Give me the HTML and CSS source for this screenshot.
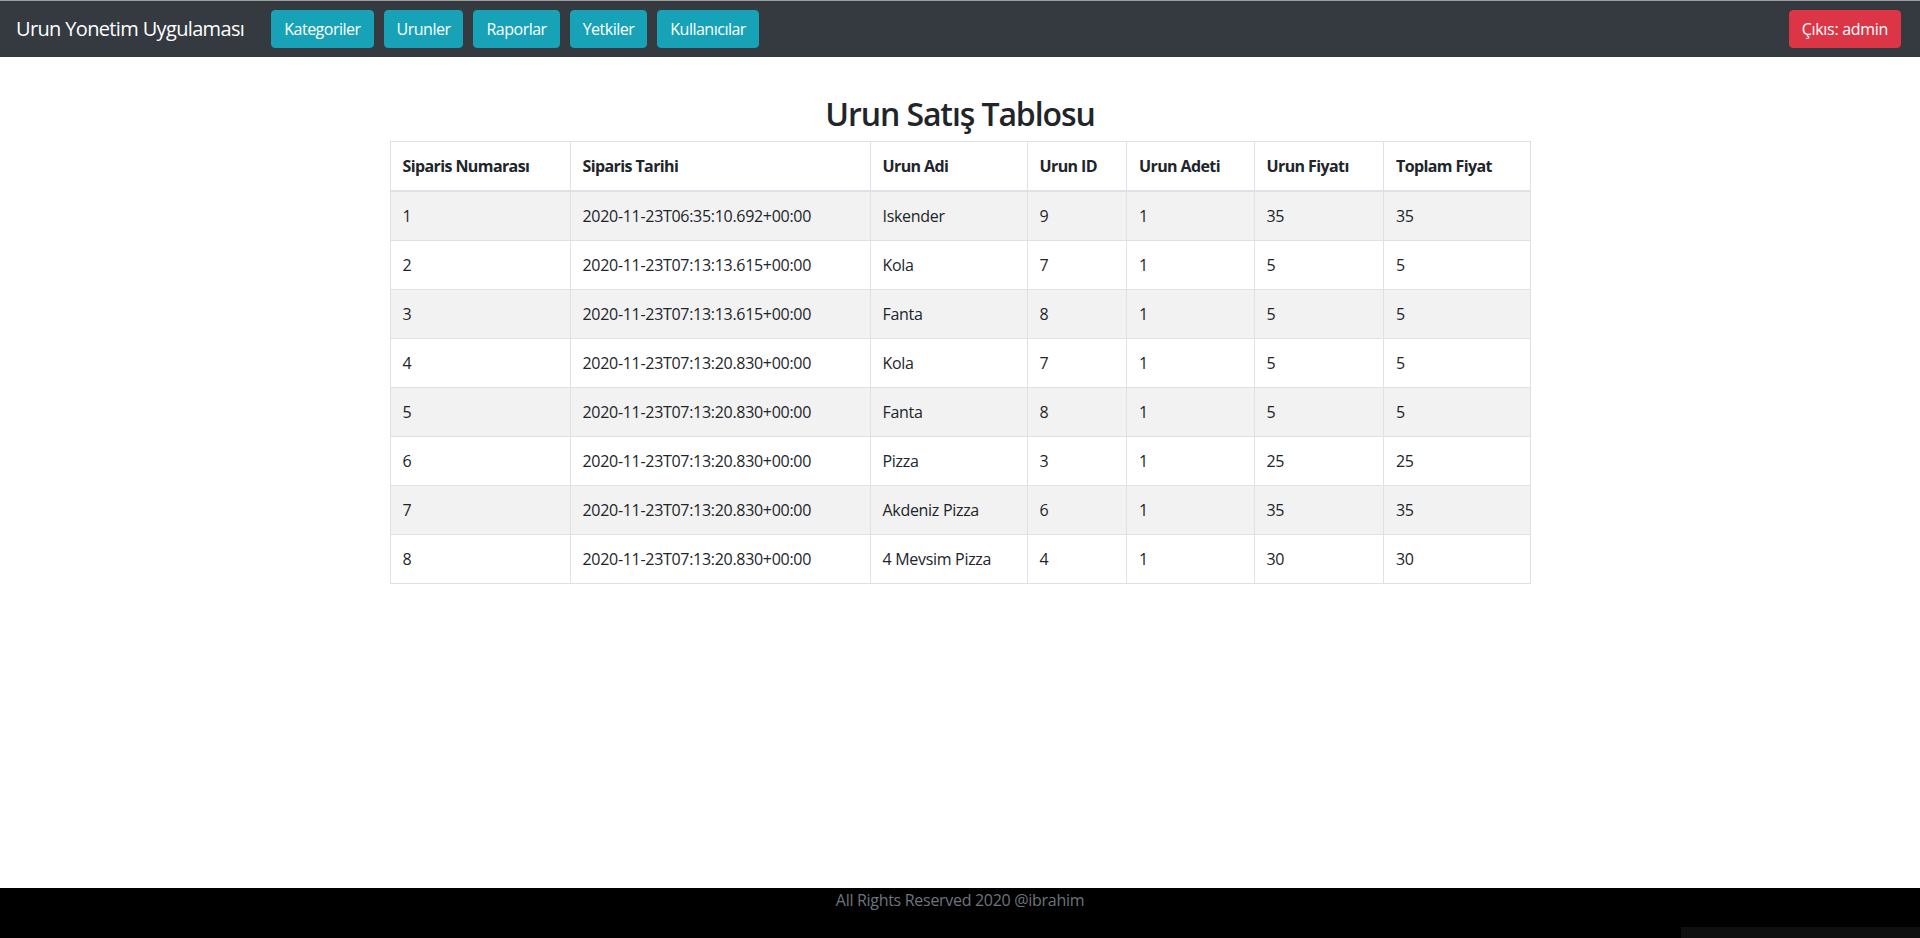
FILE: index.html
```html
<!DOCTYPE html>
<html lang="tr">
<head>
<meta charset="utf-8">
<title>Urun Satış Tablosu</title>
<link rel="stylesheet" href="styles.css">
</head>
<body>
<nav class="navbar">
  <a class="brand" href="#">Urun Yonetim Uygulaması</a>
  <div class="nav-buttons">
    <a class="btn btn-info" href="#">Kategoriler</a>
    <a class="btn btn-info" href="#">Urunler</a>
    <a class="btn btn-info" href="#">Raporlar</a>
    <a class="btn btn-info" href="#">Yetkiler</a>
    <a class="btn btn-info" href="#">Kullanıcılar</a>
  </div>
  <a class="btn btn-danger logout" href="#">Çıkıs: admin</a>
</nav>

<main class="content">
  <h2 class="title">Urun Satış Tablosu</h2>
  <table class="sales-table">
    <colgroup>
      <col class="c1"><col class="c2"><col class="c3"><col class="c4"><col class="c5"><col class="c6"><col class="c7">
    </colgroup>
    <thead>
      <tr>
        <th>Siparis Numarası</th>
        <th>Siparis Tarihi</th>
        <th>Urun Adi</th>
        <th>Urun ID</th>
        <th>Urun Adeti</th>
        <th>Urun Fiyatı</th>
        <th>Toplam Fiyat</th>
      </tr>
    </thead>
    <tbody>
      <tr><td>1</td><td>2020-11-23T06:35:10.692+00:00</td><td>Iskender</td><td>9</td><td>1</td><td>35</td><td>35</td></tr>
      <tr><td>2</td><td>2020-11-23T07:13:13.615+00:00</td><td>Kola</td><td>7</td><td>1</td><td>5</td><td>5</td></tr>
      <tr><td>3</td><td>2020-11-23T07:13:13.615+00:00</td><td>Fanta</td><td>8</td><td>1</td><td>5</td><td>5</td></tr>
      <tr><td>4</td><td>2020-11-23T07:13:20.830+00:00</td><td>Kola</td><td>7</td><td>1</td><td>5</td><td>5</td></tr>
      <tr><td>5</td><td>2020-11-23T07:13:20.830+00:00</td><td>Fanta</td><td>8</td><td>1</td><td>5</td><td>5</td></tr>
      <tr><td>6</td><td>2020-11-23T07:13:20.830+00:00</td><td>Pizza</td><td>3</td><td>1</td><td>25</td><td>25</td></tr>
      <tr><td>7</td><td>2020-11-23T07:13:20.830+00:00</td><td>Akdeniz Pizza</td><td>6</td><td>1</td><td>35</td><td>35</td></tr>
      <tr><td>8</td><td>2020-11-23T07:13:20.830+00:00</td><td>4 Mevsim Pizza</td><td>4</td><td>1</td><td>30</td><td>30</td></tr>
    </tbody>
  </table>
</main>

<footer class="footer">
  <span class="footer-text">All Rights Reserved 2020 @ibrahim</span>
</footer>
<div class="corner-strip"></div>
</body>
</html>
```

FILE: styles.css
```css
* { box-sizing: border-box; }

html, body {
  margin: 0;
  padding: 0;
  height: 100%;
}

body {
  font-family: "Open Sans", "Noto Sans", "Liberation Sans", sans-serif;
  font-size: 16px;
  line-height: 1.5;
  letter-spacing: -0.3px;
  color: #212529;
  background: #fff;
}

a { text-decoration: none; }

.navbar {
  display: flex;
  align-items: center;
  height: 57px;
  padding: 0 19px 0 16px;
  background: #343a40;
  border-top: 1px solid #9a9da1;
}

.brand {
  color: #fff;
  font-size: 20px;
  line-height: 30px;
  letter-spacing: -0.65px;
  margin-right: 27px;
  white-space: nowrap;
}

.nav-buttons {
  display: flex;
  gap: 10px;
}

.btn {
  display: inline-block;
  height: 38px;
  padding: 6px 12px;
  font-size: 16px;
  line-height: 24px;
  letter-spacing: -0.5px;
  color: #fff;
  border: 1px solid transparent;
  border-radius: 4px;
  white-space: nowrap;
}

.btn-info {
  background: #17a2b8;
  border-color: #17a2b8;
}

.btn-danger {
  background: #dc3545;
  border-color: #dc3545;
  letter-spacing: -0.3px;
}

.logout {
  margin-left: auto;
}

.content {
  display: flex;
  flex-direction: column;
  align-items: center;
}

.title {
  margin: 38px 0 8px;
  font-size: 32px;
  font-weight: 600;
  line-height: 1.2;
  letter-spacing: -1.1px;
}

.sales-table {
  width: 1140px;
  border-collapse: collapse;
  table-layout: fixed;
  border: 1px solid #dee2e6;
}

.c1 { width: 180px; }
.c2 { width: 300px; }
.c3 { width: 157px; }
.c4 { width: 99.5px; }
.c5 { width: 127.5px; }
.c6 { width: 129.5px; }
.c7 { width: 146.5px; }

.sales-table th,
.sales-table td {
  padding: 12px;
  text-align: left;
  vertical-align: top;
  border: 1px solid #dee2e6;
  white-space: nowrap;
}

.sales-table th {
  font-weight: 700;
  letter-spacing: -0.6px;
  border-bottom-width: 2px;
}

.sales-table tbody tr:nth-child(odd) {
  background: #f2f2f2;
}

.footer {
  position: fixed;
  left: 0;
  right: 0;
  bottom: 0;
  height: 50px;
  background: #000;
  text-align: center;
}

.footer-text {
  color: #6c757d;
  line-height: 24px;
}

.corner-strip {
  position: fixed;
  right: 0;
  bottom: 0;
  width: 239px;
  height: 11px;
  background: #0f0f0f;
}
```
